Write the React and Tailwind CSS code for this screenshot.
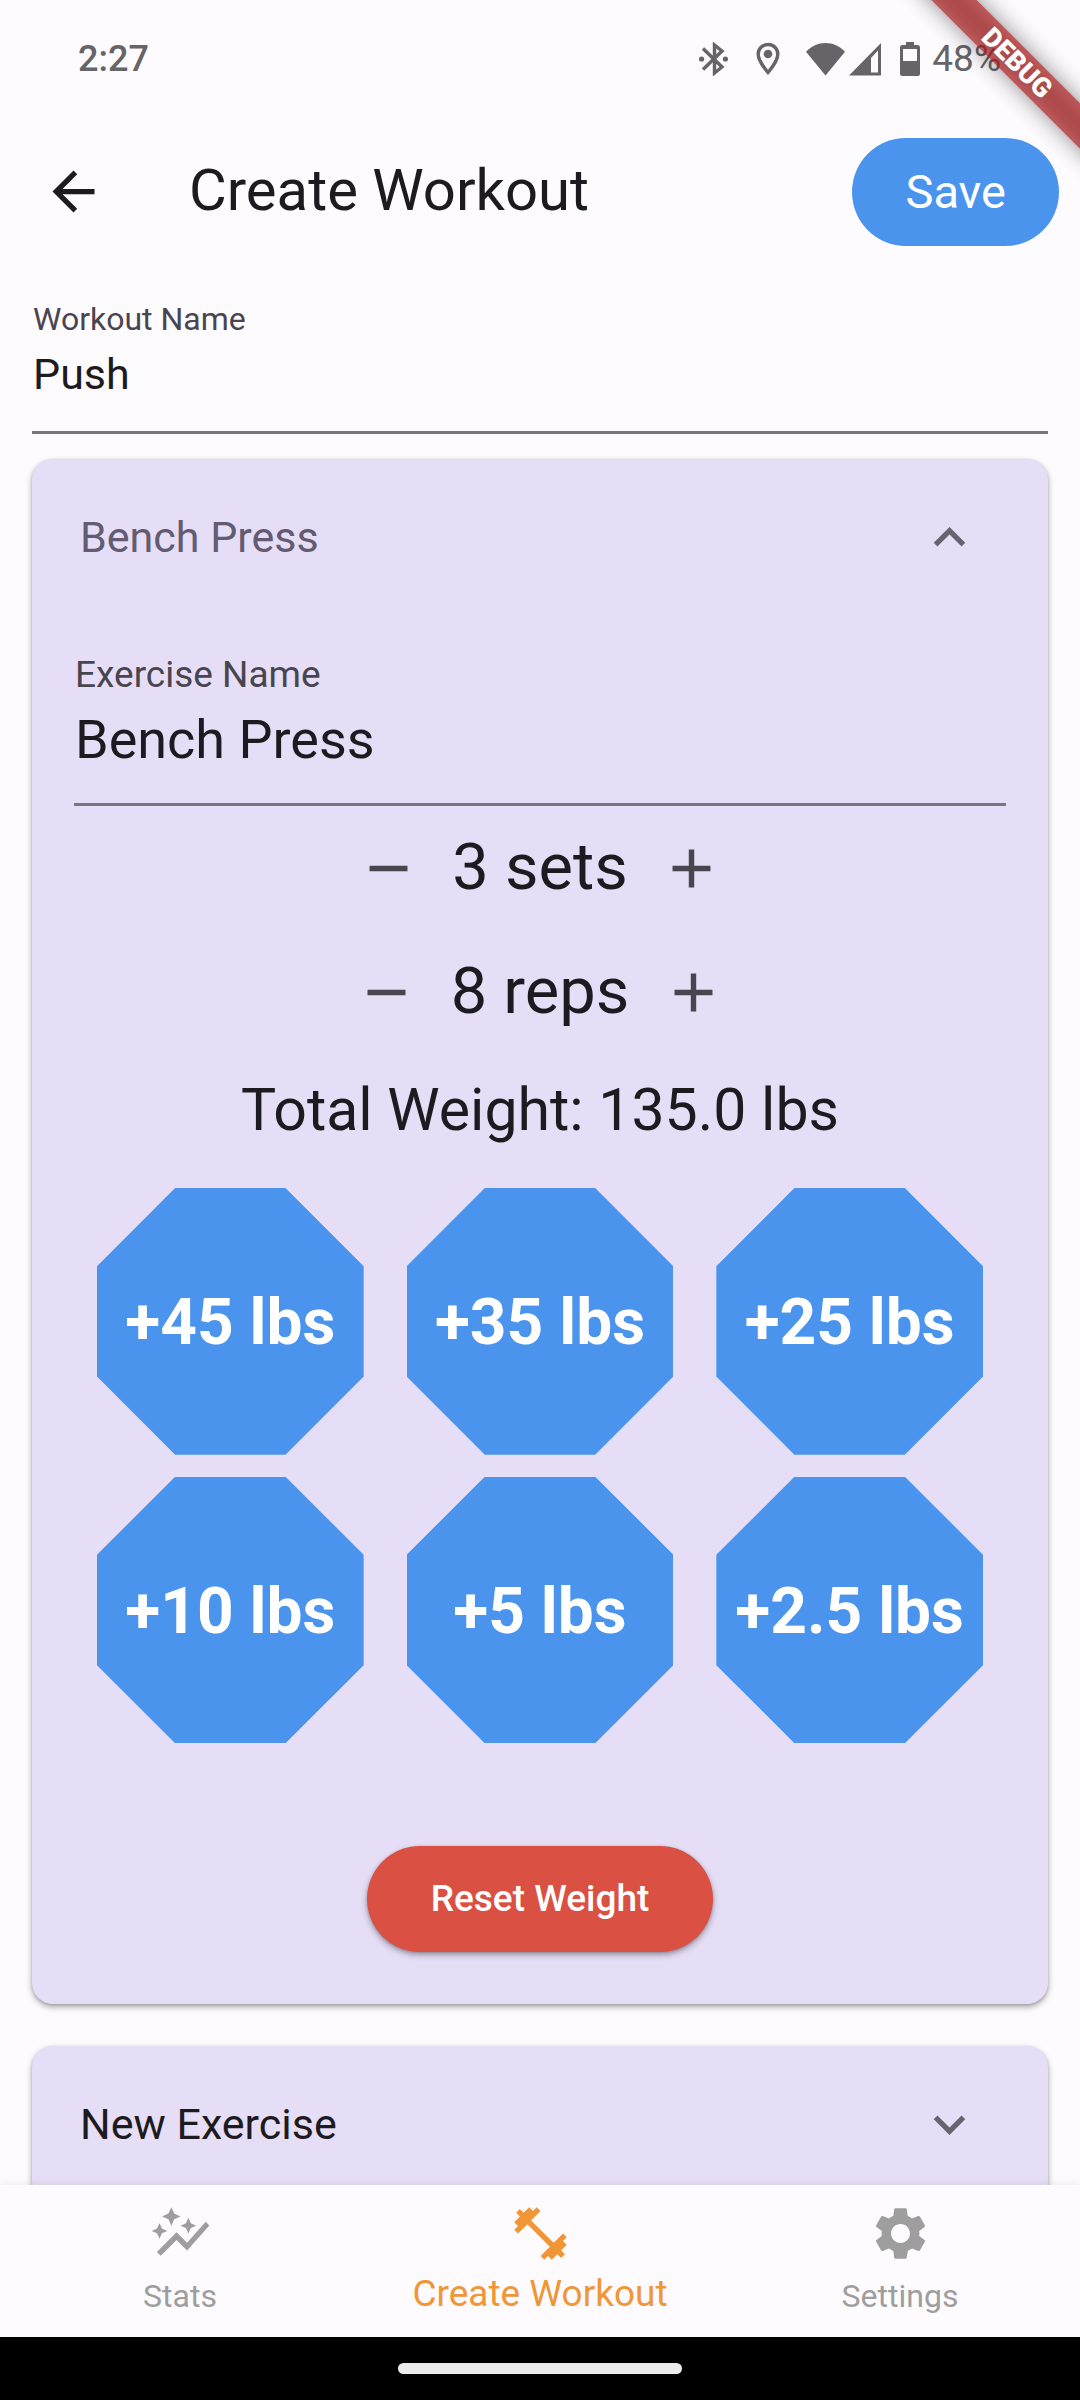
import { useState } from "react";
import {
  MdAdd,
  MdArrowBack,
  MdAutoGraph,
  MdExpandLess,
  MdExpandMore,
  MdFitnessCenter,
  MdRemove,
  MdSettings,
} from "react-icons/md";

function StatusBar() {
  return (
    <div className="flex h-[118px] shrink-0 items-center justify-between pr-[79px] pl-[78px] text-[37px] leading-[44px] text-[#666468]">
      <time className="text-[36px] font-medium">2:27</time>
      <div className="flex items-center">
        <svg className="mr-[27px] h-[34px] w-[30px]" viewBox="0 0 30 34" fill="none" stroke="currentColor" strokeWidth="3.4">
          <path d="M4 6.5 L23 25 L15.5 31 V3 L23 9 L4 27.500" />
          <circle cx="2.600" cy="17" r="2.600" fill="currentColor" stroke="none" />
          <circle cx="26.400" cy="17" r="2.600" fill="currentColor" stroke="none" />
        </svg>
        <svg className="mr-[26px] h-[34px] w-[24px]" viewBox="0 0 24 34">
          <path d="M12 2.500 C6.500 2.500 2.200 6.800 2.200 12.200 C2.200 19 12 30.500 12 30.500 C12 30.500 21.800 19 21.800 12.200 C21.800 6.800 17.500 2.500 12 2.500 Z" fill="none" stroke="currentColor" strokeWidth="3.400" />
          <circle cx="12" cy="12" r="4.300" fill="currentColor" />
        </svg>
        <svg className="mr-[4px] h-[34px] w-[39px]" viewBox="0 0 39 34" fill="currentColor">
          <path d="M19.500 33.500 L0 9.800 C5.500 4 12 1 19.500 1 C27 1 33.500 4 39 9.800 Z" />
        </svg>
        <svg className="mr-[19px] h-[34px] w-[32px]" viewBox="0 0 32 34" fill="currentColor">
          <path fillRule="evenodd" d="M32 1 V33.500 H0 Z M22 16 V30.500 H29 V8.500 Z" />
        </svg>
        <svg className="mr-[12px] h-[34px] w-[20px]" viewBox="0 0 20 34" fill="currentColor">
          <path fillRule="evenodd" d="M6 0 H14 V3 H17.500 Q20 3 20 5.500 V31.500 Q20 34 17.500 34 H2.500 Q0 34 0 31.500 V5.500 Q0 3 2.500 3 H6 Z M3 7 V19 H17 V7 Z" />
        </svg>
        <span>48%</span>
      </div>
    </div>
  );
}

function DebugBanner() {
  return (
    <div className="pointer-events-none absolute top-[47px] -right-[67px] h-[32px] w-[260px] rotate-45">
      <div className="absolute inset-0 bg-black/45 blur-[11px]" />
      <div className="relative bg-[#b71c1c]/63 text-center text-[27px] leading-[32px] font-black text-white">DEBUG</div>
    </div>
  );
}

function Stepper({ value, unit, onChange }) {
  return (
    <div className="flex h-[124px] items-center justify-center text-[#49454f]">
      <button type="button" aria-label={`Fewer ${unit}`} className="flex size-[128px] items-center justify-center" onClick={() => onChange(Math.max(0, value - 1))}>
        <MdRemove className="size-[65px]" />
      </button>
      <span className="pb-[2px] text-[65px] leading-[76px] text-[#1d1b20]">{value} {unit}</span>
      <button type="button" aria-label={`More ${unit}`} className="flex size-[128px] items-center justify-center" onClick={() => onChange(value + 1)}>
        <MdAdd className="size-[65px]" />
      </button>
    </div>
  );
}

function CardHeader({ title, open, onClick }) {
  const Chevron = open ? MdExpandLess : MdExpandMore;
  return (
    <button type="button" aria-expanded={open} onClick={onClick} className="flex w-full items-center justify-between py-[54px] pr-[67px] pl-[48px] text-left">
      <span className={open ? "text-[43px] leading-[48px] text-[#625b71]" : "text-[43px] leading-[48px] text-[#1d1b20]"}>{title}</span>
      <Chevron className="-my-2 size-[63px] text-[#69636f]" />
    </button>
  );
}

const plates = [45, 35, 25, 10, 5, 2.5];
const cardClass = "rounded-[21px] bg-[#e6def6] shadow-[0_3px_6px_rgba(0,0,0,0.32),0_1px_3px_rgba(0,0,0,0.15)]";

const tabs = [
  { label: "Stats", Icon: MdAutoGraph },
  { label: "Create Workout", Icon: MdFitnessCenter, active: true },
  { label: "Settings", Icon: MdSettings },
];

export default function App() {
  const [workout, setWorkout] = useState("Push");
  const [exercise, setExercise] = useState("Bench Press");
  const [open, setOpen] = useState(true);
  const [newOpen, setNewOpen] = useState(false);
  const [sets, setSets] = useState(3);
  const [reps, setReps] = useState(8);
  const [weight, setWeight] = useState(135);

  return (
    <div className="relative flex h-screen flex-col overflow-hidden bg-[#fefbff] font-['Roboto',sans-serif] text-[#1d1b20]">
      <StatusBar />
      <header className="flex h-[147px] shrink-0 items-center pr-[21px] pl-[42px]">
        <button type="button" aria-label="Back">
          <MdArrowBack className="size-[63px]" />
        </button>
        <h1 className="ml-[84px] flex-1 pb-[4px] text-[58px] leading-[68px]">Create Workout</h1>
        <button type="button" className="h-[108px] rounded-full bg-[#4a94ed] px-[53px] text-[47px] leading-[56px] text-white">
          Save
        </button>
      </header>

      <main className="min-h-0 flex-1 overflow-hidden px-[32px] pt-[36px]">
        <div className="border-b-3 border-[#79747e] pb-[33px]">
          <label htmlFor="workout" className="block pl-px text-[32px] leading-[36px] text-[#49454f]">Workout Name</label>
          <input id="workout" value={workout} onChange={(e) => setWorkout(e.target.value)} className="mt-[13px] block h-[48px] w-full bg-transparent pl-px text-[43px] leading-[48px] outline-none" />
        </div>

        <section className={`${cardClass} mt-[25px]`}>
          <CardHeader title={exercise} open={open} onClick={() => setOpen(!open)} />
          {open && (
            <div className="px-[42px] pt-[38px] pb-[52px]">
              <div className="border-b-3 border-[#79747e] pb-[33px]">
                <label htmlFor="exercise" className="block pl-px text-[37px] leading-[44px] text-[#49454f]">Exercise Name</label>
                <input id="exercise" value={exercise} onChange={(e) => setExercise(e.target.value)} className="mt-[13px] block h-[60px] w-full bg-transparent pl-px text-[54px] leading-[60px] outline-none" />
              </div>
              <Stepper value={sets} unit="sets" onChange={setSets} />
              <Stepper value={reps} unit="reps" onChange={setReps} />
              <p className="mt-[22px] text-center text-[59px] leading-[68px]">Total Weight: {weight.toFixed(1)} lbs</p>
              <div className="mt-[44px] grid grid-cols-3 gap-x-[43px] gap-y-[22px] px-[23px]">
                {plates.map((plate) => (
                  <button
                    key={plate}
                    type="button"
                    onClick={() => setWeight(weight + plate)}
                    className="aspect-square bg-[#4a94ed] pt-[4px] text-[64px] leading-[76px] font-bold whitespace-nowrap text-white [clip-path:polygon(29.3%_0,70.7%_0,100%_29.3%,100%_70.7%,70.7%_100%,29.3%_100%,0_70.7%,0_29.3%)]"
                  >
                    +{plate} lbs
                  </button>
                ))}
              </div>
              <div className="mt-[103px] flex justify-center">
                <button type="button" onClick={() => setWeight(45)} className="h-[106px] rounded-full bg-[#da5043] px-[64px] text-[37px] leading-[44px] font-medium text-white shadow-[0_3px_6px_rgba(0,0,0,0.32),0_1px_3px_rgba(0,0,0,0.15)]">
                  Reset Weight
                </button>
              </div>
            </div>
          )}
        </section>

        <section className={`${cardClass} mt-[42px]`}>
          <CardHeader title="New Exercise" open={newOpen} onClick={() => setNewOpen(!newOpen)} />
        </section>
      </main>

      <nav className="relative grid h-[152px] shrink-0 grid-cols-3 bg-[#fefbff] shadow-[0_0_10px_rgba(0,0,0,0.08)]">
        {tabs.map(({ label, Icon, active }) => (
          <a key={label} href="#" className={active ? "flex flex-col items-center gap-[11px] pt-[17px] text-[37px] leading-[36px] text-[#f09637]" : "flex flex-col items-center gap-[13px] pt-[17px] text-[32px] leading-[36px] text-[#9e9e9e]"}>
            <Icon className="size-[63px]" />
            {label}
          </a>
        ))}
      </nav>
      <div className="flex h-[63px] shrink-0 items-center justify-center bg-black">
        <div className="h-[11px] w-[284px] rounded-full bg-[#ececec]" />
      </div>
      <DebugBanner />
    </div>
  );
}
